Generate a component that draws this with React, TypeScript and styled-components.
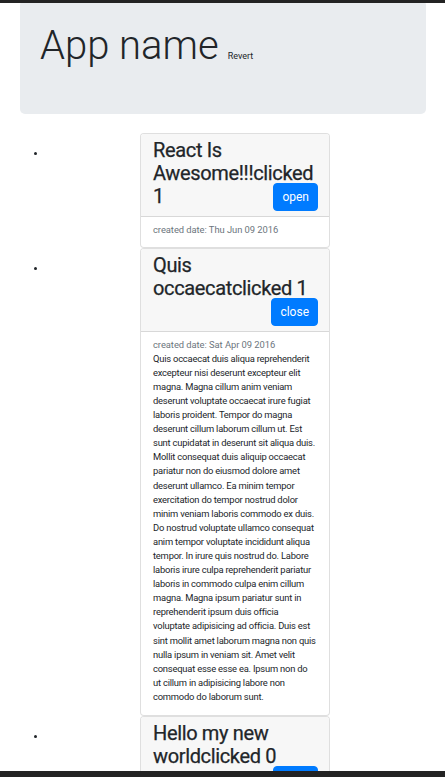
import { useState } from 'react';
import styled, { createGlobalStyle } from 'styled-components';

const GlobalStyle = createGlobalStyle`
  body {
    margin: 0;
    background: #fff;
    color: #212529;
    font-family: Roboto, 'Liberation Sans', Arial, sans-serif;
  }
`;

const EdgeBar = styled.div<{ $bottom?: boolean }>`
  position: fixed;
  left: 0;
  right: 0;
  z-index: 10;
  background: #232323;
  ${({ $bottom }) => ($bottom ? 'bottom: 0; height: 6px;' : 'top: 0; height: 3px;')}
`;

const Page = styled.div`
  padding: 0 19px 40px 20px;
`;

const Jumbotron = styled.header`
  background: #e9ecef;
  border-radius: 5px;
  padding: 22px 20px 44px;
`;

const AppTitle = styled.h1`
  margin: 0;
  font-size: 40px;
  font-weight: 300;
  line-height: 48px;
`;

const RevertButton = styled.button`
  margin-left: 9px;
  padding: 0;
  border: none;
  background: none;
  color: #212529;
  font-family: inherit;
  font-size: 9px;
  vertical-align: baseline;
  cursor: pointer;
`;

const List = styled.ul`
  margin: 19px 0 0;
  padding: 0 0 0 27px;
  list-style: disc;
`;

const Item = styled.li`
  font-size: 9.4px;
`;

const Card = styled.div`
  width: 190px;
  margin-left: 93px;
  box-sizing: border-box;
  background: #fff;
  border: 1px solid rgba(0, 0, 0, 0.125);
  border-radius: 4px;
  overflow: hidden;
`;

const CardHeader = styled.div`
  display: flow-root;
  padding: 5px 11px 5px 12px;
  background: #f7f7f7;
  border-bottom: 1px solid rgba(0, 0, 0, 0.125);
`;

const CardTitle = styled.h5`
  margin: 0;
  font-size: 20px;
  font-weight: 400;
  letter-spacing: -0.35px;
  line-height: 23px;
  -webkit-text-stroke: 0.25px #212529;
`;

const ToggleButton = styled.button`
  float: right;
  margin-top: -2px;
  padding: 4px 8px;
  border: 1px solid #007bff;
  border-radius: 4px;
  background: #007bff;
  color: #fff;
  font-family: inherit;
  font-size: 12px;
  font-weight: 400;
  letter-spacing: 0;
  line-height: 18px;
  -webkit-text-stroke: 0;
  cursor: pointer;
`;

const CardBody = styled.div`
  padding: 7px 12px 10.5px;
`;

const CreatedDate = styled.div`
  color: #6c757d;
  font-size: 9.4px;
  letter-spacing: -0.05px;
  line-height: 12.6px;
`;

const Description = styled.p`
  margin: 0;
  font-size: 9.4px;
  letter-spacing: -0.21px;
  line-height: 14.1px;
`;

type Post = {
  title: string;
  date: string;
  body: string;
  clicks: number;
  open: boolean;
};

const initialPosts: Post[] = [
  {
    title: 'React Is Awesome!!!',
    date: 'Thu Jun 09 2016',
    body: 'Labore eiusmod ut nisi sunt enim. Ullamco velit nulla cillum magna irure ex.',
    clicks: 1,
    open: false,
  },
  {
    title: 'Quis occaecat',
    date: 'Sat Apr 09 2016',
    body:
      'Quis occaecat duis aliqua reprehenderit excepteur nisi deserunt excepteur elit magna. Magna cillum anim veniam deserunt voluptate occaecat irure fugiat laboris proident. Tempor do magna deserunt cillum laborum cillum ut. Est sunt cupidatat in deserunt sit aliqua duis. Mollit consequat duis aliquip occaecat pariatur non do eiusmod dolore amet deserunt ullamco. Ea minim tempor exercitation do tempor nostrud dolor minim veniam laboris commodo ex duis. Do nostrud voluptate ullamco consequat anim tempor voluptate incididunt aliqua tempor. In irure quis nostrud do. Labore laboris irure culpa reprehenderit pariatur laboris in commodo culpa enim cillum magna. Magna ipsum pariatur sunt in reprehenderit ipsum duis officia voluptate adipisicing ad officia. Duis est sint mollit amet laborum magna non quis nulla ipsum in veniam sit. Amet velit consequat esse esse ea. Ipsum non do ut cillum in adipisicing labore non commodo do laborum sunt.',
    clicks: 1,
    open: true,
  },
  {
    title: 'Hello my new world',
    date: 'Mon May 16 2016',
    body: 'Aliqua minim ullamco nostrud cillum sit ex labore duis tempor.',
    clicks: 0,
    open: false,
  },
];

export default function App() {
  const [posts, setPosts] = useState(initialPosts);

  const toggle = (index: number) => {
    setPosts((prev) =>
      prev.map((p, i) => (i === index ? { ...p, open: !p.open, clicks: p.clicks + 1 } : p))
    );
  };

  return (
    <>
      <GlobalStyle />
      <EdgeBar />
      <Page>
        <Jumbotron>
          <AppTitle>
            App name
            <RevertButton onClick={() => setPosts(initialPosts)}>Revert</RevertButton>
          </AppTitle>
        </Jumbotron>
        <List>
          {posts.map((post, i) => (
            <Item key={post.title}>
              <Card>
                <CardHeader>
                  <CardTitle>
                    {post.title}clicked {post.clicks}
                    <ToggleButton onClick={() => toggle(i)}>{post.open ? 'close' : 'open'}</ToggleButton>
                  </CardTitle>
                </CardHeader>
                <CardBody>
                  <CreatedDate>created date: {post.date}</CreatedDate>
                  {post.open && <Description>{post.body}</Description>}
                </CardBody>
              </Card>
            </Item>
          ))}
        </List>
      </Page>
      <EdgeBar $bottom />
    </>
  );
}
